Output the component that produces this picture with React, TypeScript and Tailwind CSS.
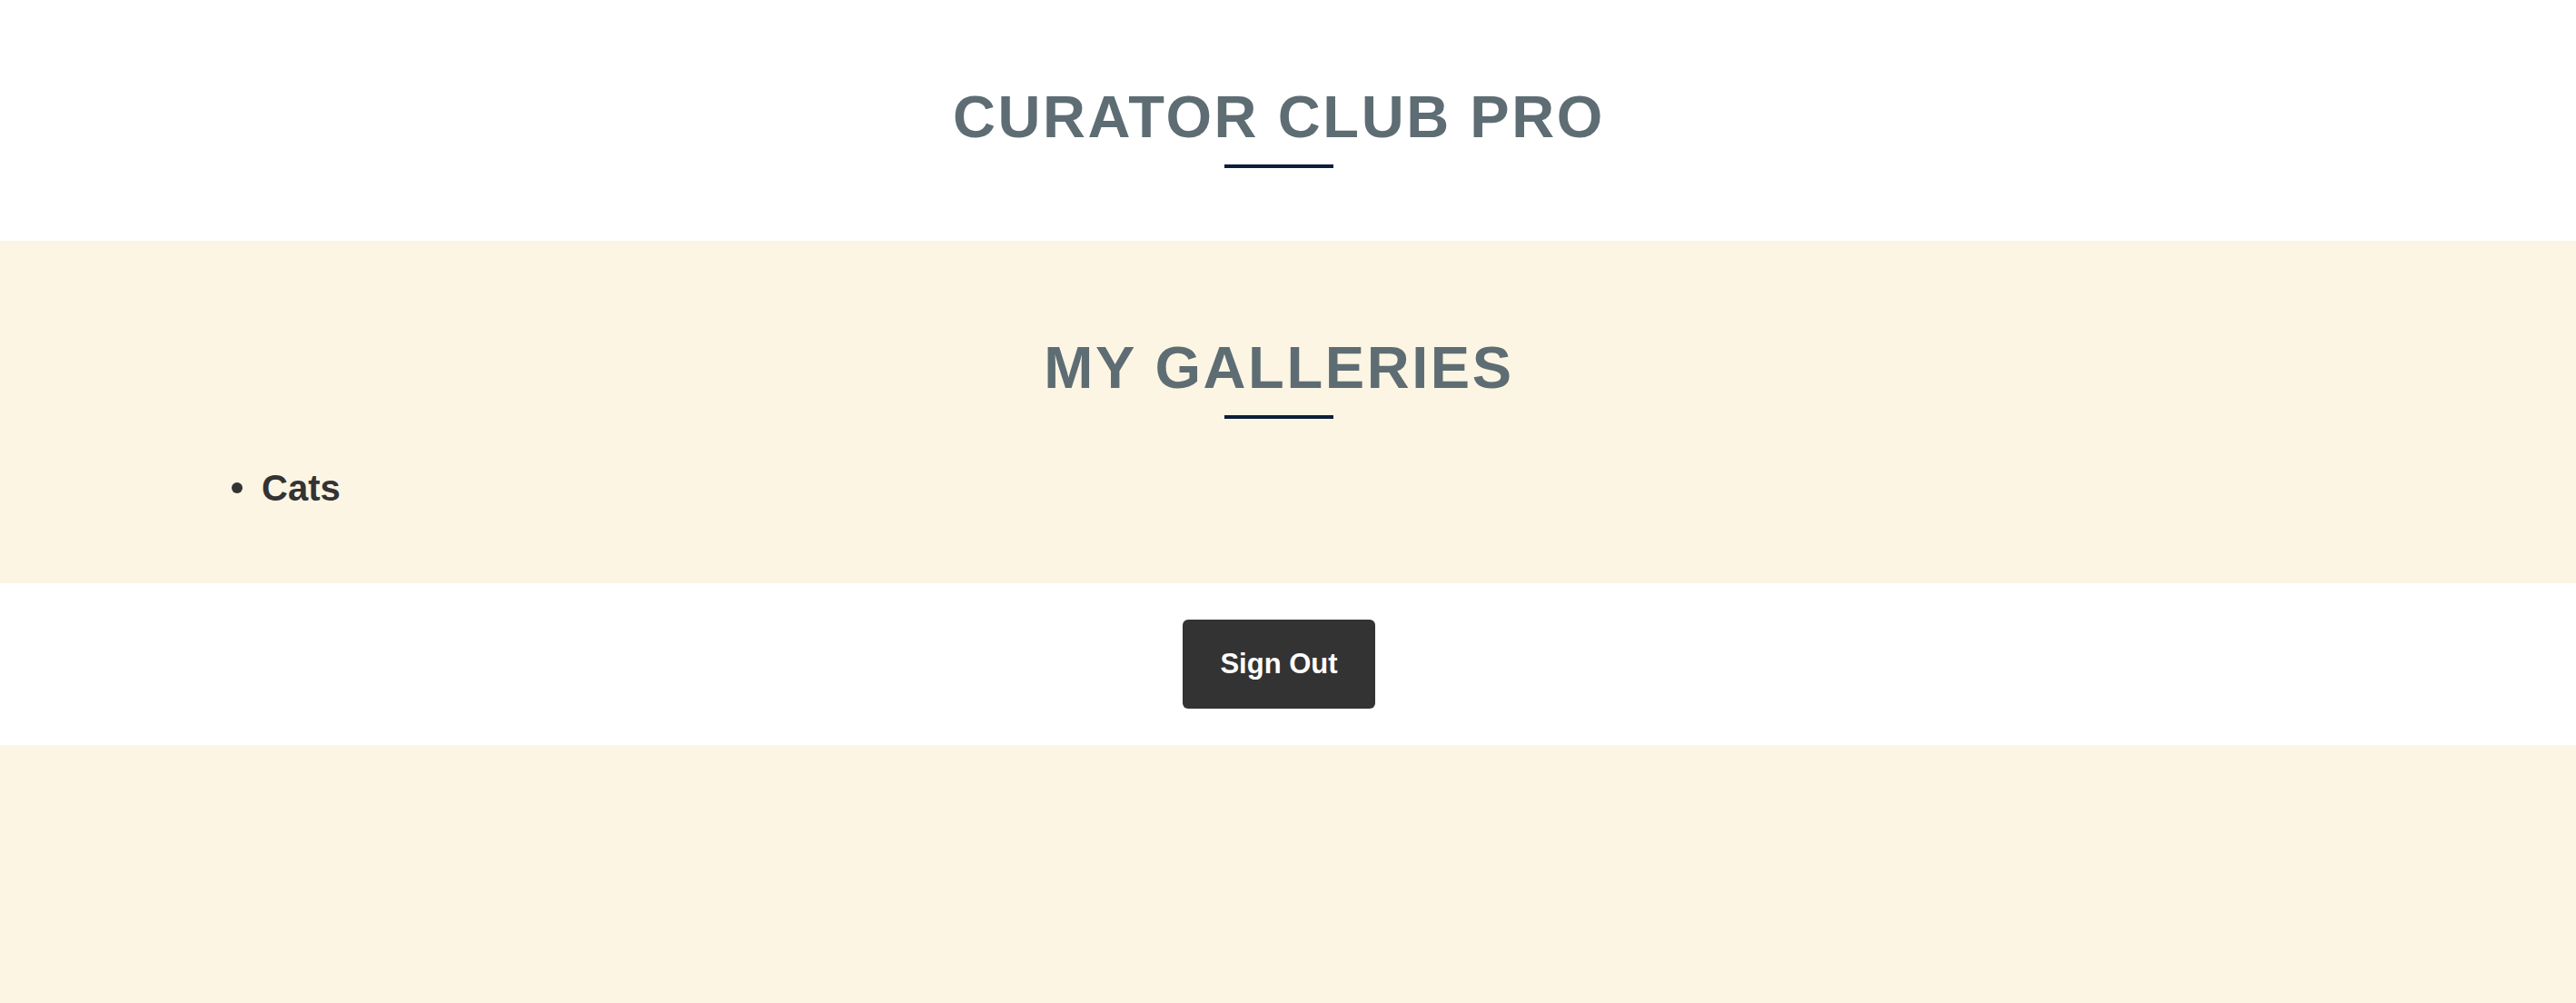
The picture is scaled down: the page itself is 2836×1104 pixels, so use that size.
import React from 'react';

const font = { fontFamily: '"Liberation Sans", Arial, Helvetica, sans-serif' };

const Heading: React.FC<{ children: React.ReactNode }> = ({ children }) => (
  <div className="flex flex-col items-center">
    <h1 className="text-[65px] leading-[65px] font-bold tracking-[2.6px] text-[#5e6d73] uppercase">
      {children}
    </h1>
    <span className="block w-[120px] h-[4px] bg-[#0c1e3a] mt-[20px]" />
  </div>
);

const App: React.FC = () => {
  const galleries = ['Cats'];

  return (
    <div className="min-h-screen flex flex-col bg-white" style={font}>
      <header className="bg-white pt-[96px] pb-[80px] pr-[20px]">
        <Heading>Curator Club Pro</Heading>
      </header>

      <section className="bg-[#fcf5e3] pt-[107px] pb-[81px]">
        <div className="pr-[20px]">
          <Heading>My Galleries</Heading>
        </div>
        <ul className="mt-[52px] pl-[255px]">
          {galleries.map((g) => (
            <li key={g} className="flex items-center gap-[21px] text-[40px] leading-[48px] font-bold text-[#333333]">
              <span className="block w-[12px] h-[12px] rounded-full bg-[#333333]" />
              {g}
            </li>
          ))}
        </ul>
      </section>

      <div className="bg-white py-[40px] pr-[20px] flex justify-center">
        <button className="w-[212px] h-[98px] rounded-[6px] bg-[#333333] text-white text-[31px] font-bold">
          Sign Out
        </button>
      </div>

      <div className="flex-1 bg-[#fcf5e3]" />
    </div>
  );
};

export default App;
